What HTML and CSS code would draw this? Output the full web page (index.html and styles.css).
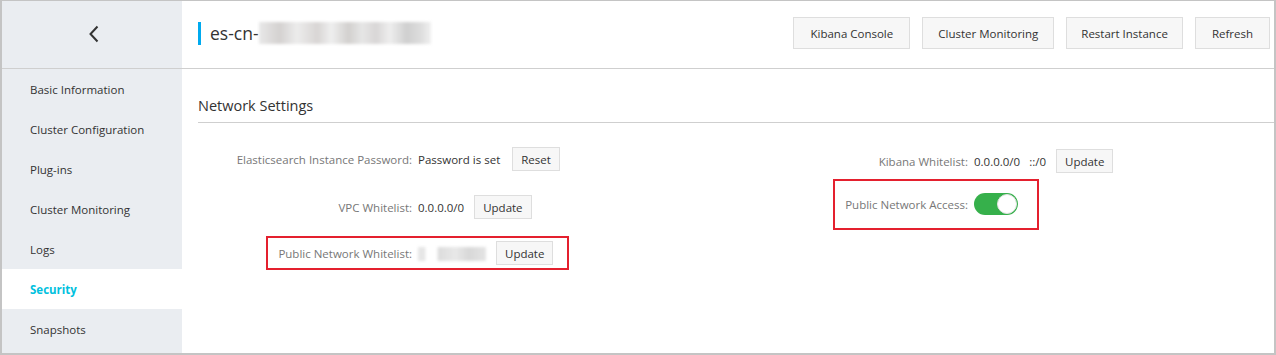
FILE: index.html
```html
<!DOCTYPE html>
<html lang="en">
<head>
	<meta charset="UTF-8"/>
	<title>Security</title>
	<meta name="viewport" content="width=device-width, initial-scale=1.0"/>
	<link rel="stylesheet" href="styles.css">
</head>
<body>
	<div class="frame">
		<aside class="side">
			<div class="side-head">
				<svg class="back" width="12" height="18" viewBox="0 0 12 18">
					<path d="M9.5 1.5 L2.5 9 L9.5 16.5" fill="none" stroke="#333" stroke-width="2"/>
				</svg>
			</div>
			<nav class="side-nav">
				<a href="#">Basic Information</a>
				<a href="#">Cluster Configuration</a>
				<a href="#">Plug-ins</a>
				<a href="#">Cluster Monitoring</a>
				<a href="#">Logs</a>
				<a href="#" class="active">Security</a>
				<a href="#">Snapshots</a>
			</nav>
		</aside>

		<main class="main">
			<header class="main-head">
				<h1 class="title">es-cn-<span class="blur blur-title"></span></h1>
				<div class="actions">
					<button class="btn">Kibana Console</button>
					<button class="btn">Cluster Monitoring</button>
					<button class="btn">Restart Instance</button>
					<button class="btn">Refresh</button>
				</div>
			</header>

			<section class="panel">
				<h2 class="panel-title">Network Settings</h2>
				<div class="fields">
					<div class="col col-left">
						<div class="row row-1">
							<span class="label">Elasticsearch Instance Password:</span>
							<span class="value">Password is set</span>
							<button class="btn btn-sm">Reset</button>
						</div>
						<div class="row row-2">
							<span class="label">VPC Whitelist:</span>
							<span class="value">0.0.0.0/0</span>
							<button class="btn btn-sm">Update</button>
						</div>
						<div class="row row-3 mark">
							<span class="label">Public Network Whitelist:</span>
							<span class="value"><span class="blur blur-ip"></span></span>
							<button class="btn btn-sm">Update</button>
						</div>
					</div>
					<div class="col col-right">
						<div class="row row-1">
							<span class="label">Kibana Whitelist:</span>
							<span class="value">0.0.0.0/0 <span class="ip6">::/0</span></span>
							<button class="btn btn-sm">Update</button>
						</div>
						<div class="row row-2 mark">
							<span class="label">Public Network Access:</span>
							<span class="switch on"><span class="knob"></span></span>
						</div>
					</div>
				</div>
			</section>
		</main>
	</div>
</body>
</html>
```

FILE: styles.css
```css
* {
	margin: 0;
	padding: 0;
	box-sizing: border-box;
}

body {
	background-color: #fff;
	color: #333;
	font-family: "Open Sans", "Noto Sans", sans-serif;
	font-size: 11.5px;
}

.frame {
	display: flex;
	width: 1276px;
	height: 355px;
	border: 2px solid #c4c4c4;
	border-top-width: 1px;
	overflow: hidden;
}

/* sidebar */
.side {
	width: 180px;
	flex-shrink: 0;
	background-color: #eaedf1;
}
.side-head {
	display: flex;
	justify-content: center;
	align-items: center;
	height: 68px;
	padding-bottom: 1px;
	border-bottom: 1px solid #cfcfcf;
}
.back {
	margin-left: 4px;
}
.side-nav a {
	display: flex;
	align-items: center;
	height: 40px;
	padding-left: 28px;
	color: #333;
	text-decoration: none;
}
.side-nav a.active {
	background-color: #fff;
	color: #00c1de;
	font-weight: bold;
}

/* main */
.main {
	flex: 1;
	min-width: 0;
}
.main-head {
	display: flex;
	justify-content: space-between;
	align-items: center;
	height: 68px;
	padding: 0 4px 3px 16px;
	border-bottom: 1px solid #cfcfcf;
}
.title {
	display: flex;
	align-items: center;
	height: 23px;
	padding-left: 9px;
	border-left: 3px solid #00aaef;
	font-size: 17.5px;
	font-weight: normal;
	color: #333;
}
.actions {
	display: flex;
	gap: 12px;
}

.btn {
	height: 32px;
	padding: 0 16px;
	background-color: #f7f7f7;
	border: 1px solid #dedede;
	color: #333;
	font-family: inherit;
	font-size: 11.5px;
	cursor: pointer;
}
.actions .btn:nth-child(1) {
	padding: 0 16px;
}
.actions .btn:nth-child(2) {
	padding: 0 15px;
}
.actions .btn:nth-child(3) {
	padding: 0 14px;
}
.btn-sm {
	height: 24px;
	padding: 0 8px;
	margin-left: 10px;
	font-size: 11.5px;
}

/* blurred values */
.blur {
	display: inline-block;
	filter: blur(1.5px);
}
.blur-title {
	width: 172px;
	height: 22px;
	background: linear-gradient(90deg, #e8e8e8 0, #d4d1d0 12%, #ececec 22%, #d8d5d4 34%, #efefef 42%, #d2d0ce 52%, #e6e6e6 60%, #d8d6d6 68%, #eeeeee 76%, #cfcfcf 86%, #dddddd 94%, #f0f0f0 100%);
}
.blur-ip {
	width: 68px;
	height: 14px;
	vertical-align: middle;
	background: linear-gradient(90deg, #e6e6e6 0, #e6e6e6 10%, #fff 12%, #fff 28%, #dcdcdc 30%, #e8e8e8 55%, #d8d8d8 75%, #e4e4e4 100%);
}

/* panel */
.panel {
	padding-left: 16px;
}
.panel-title {
	margin-top: 26px;
	padding-bottom: 5px;
	border-bottom: 1px solid #cfcfcf;
	font-size: 14.5px;
	font-weight: normal;
	line-height: 22px;
	color: #333;
}

.fields {
	display: grid;
	grid-template-columns: 538px 1fr;
}
.row {
	display: flex;
	align-items: center;
	height: 24px;
}
.label {
	flex-shrink: 0;
	padding-right: 6px;
	text-align: right;
	color: #777;
}
.value {
	white-space: nowrap;
}
.ip6 {
	margin-left: 6px;
}

.col-left .label {
	width: 220px;
}
.col-left .row-1 {
	margin-top: 24px;
}
.col-left .row-1 .btn-sm {
	margin-left: 12px;
}
.col-left .row-2 {
	margin-top: 24px;
}
.col-left .row-3 {
	margin-top: 17px;
	margin-left: 68px;
}
.col-left .row-3 .label {
	width: 150px;
}

.col-right .label {
	width: 238px;
}
.col-right .row-1 {
	margin-top: 26px;
}
.col-right .row-2 {
	margin-top: 6px;
	margin-left: 97px;
}
.col-right .row-2 .label {
	width: 139px;
}

.mark {
	width: fit-content;
	height: auto;
	border: 2px solid #e4202e;
}
.col-left .mark {
	padding: 3px 14px 3px 0;
}
.col-right .mark {
	padding: 12px 19px 13px 0;
}

.switch {
	position: relative;
	display: inline-block;
	width: 44px;
	height: 22px;
	border-radius: 11px;
	background-color: #36b04b;
}
.switch .knob {
	position: absolute;
	top: 1px;
	right: 1px;
	width: 20px;
	height: 20px;
	border-radius: 50%;
	background-color: #fff;
	border: 1px solid #e2e2e2;
}
```
